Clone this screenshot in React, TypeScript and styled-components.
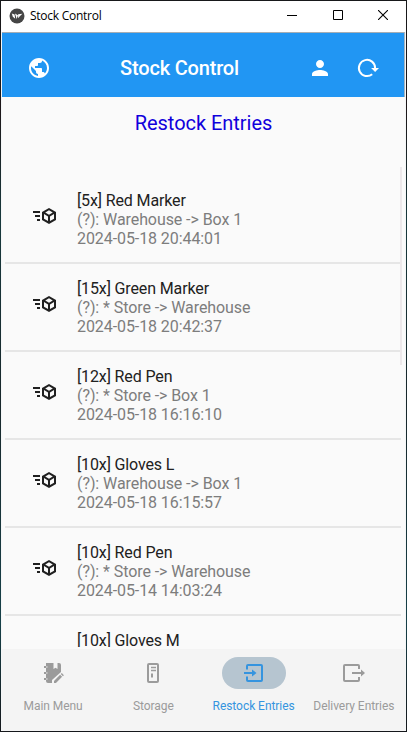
import React from 'react';
import styled, { createGlobalStyle } from 'styled-components';
import { MdPerson, MdPublic } from 'react-icons/md';

const Global = createGlobalStyle`
  * { box-sizing: border-box; }
  html, body { margin: 0; height: 100%; overflow: hidden; }
  body { font-family: Roboto, "Liberation Sans", sans-serif; background: #18181c; }
  svg { display: block; flex: none; }
`;

const Window = styled.div`
  display: flex;
  flex-direction: column;
  width: 407px;
  height: 732px;
  padding: 1px;
  background: linear-gradient(#17181a, #1d1719 15%, #17383c 30%, #18272b 55%, #164048 85%, #15171b);
`;

const TitleBar = styled.div`
  display: flex;
  align-items: center;
  height: 31px;
  flex: none;
  background: #fff;
  color: #000;
`;

const AppIcon = styled.div`
  margin: -2px 0 0 8px;
`;

const WindowTitle = styled.span`
  flex: 1;
  margin-left: 5px;
  margin-top: -2px;
  font: 12px/16px "Open Sans", "Noto Sans", sans-serif;
  letter-spacing: -0.26px;
`;

const WindowButton = styled.div`
  display: flex;
  justify-content: center;
  width: 45.5px;
  margin-top: -3px;
`;

const Client = styled.div`
  display: flex;
  flex-direction: column;
  flex: 1;
  min-height: 0;
  background: #fafafa;
  border: 1px solid #f4f6f7;
  border-width: 0 1px 0 1px;
`;

const AppBar = styled.header`
  display: flex;
  align-items: center;
  height: 65px;
  flex: none;
  padding: 5px 24px 0 25px;
  background: #2196f3;
  border-top: 1px solid #a5aeb5;
  border-right: 1px solid #a5b4c0;
  color: #fff;
`;

const AppTitle = styled.h1`
  flex: 1;
  margin: 0 0 0 69px;
  font-size: 20px;
  font-weight: 500;
  line-height: 24px;
  letter-spacing: -0.17px;
`;

const Action = styled.div`
  margin-left: 24px;
`;

const Heading = styled.h2`
  margin: 0;
  padding-top: 14px;
  height: 70px;
  flex: none;
  text-align: center;
  font-size: 20px;
  font-weight: 400;
  line-height: 24px;
  letter-spacing: -0.03px;
  color: #1000dc;
`;

const Scroller = styled.div`
  display: flex;
  flex: 1;
  min-height: 0;
  overflow: hidden;
  margin-bottom: 2px;
  padding-left: 3px;
`;

const List = styled.div`
  flex: 1;
  padding-top: 9px;
`;

const Track = styled.div`
  width: 2px;
  height: 198px;
  margin: 0 3px 0 -1px;
  background: #ece8ea;
`;

const Row = styled.div`
  display: flex;
  height: 88px;
  padding: 15px 0 0 28px;
  border-bottom: 2px solid #e6e6e6;
`;

const RowIcon = styled.div`
  width: 44px;
  padding-top: 13px;
  color: #202020;
`;

const Line = styled.div<{ $primary?: boolean }>`
  font-size: 16px;
  line-height: 19px;
  white-space: nowrap;
  letter-spacing: ${(p) => (p.$primary ? -0.13 : -0.08)}px;
  color: ${(p) => (p.$primary ? '#212121' : '#7d7d7d')};
`;

const NavBar = styled.nav`
  display: grid;
  grid-template-columns: repeat(4, 100.25px);
  height: 82px;
  flex: none;
  padding: 8px 0 0 1px;
  background: #f4f4f4;
`;

const NavItem = styled.div<{ $active?: boolean }>`
  display: flex;
  flex-direction: column;
  align-items: center;
  color: ${(p) => (p.$active ? '#3594df' : '#9b9b9b')};
`;

const Pill = styled.div<{ $active?: boolean }>`
  display: flex;
  align-items: center;
  justify-content: center;
  width: 64px;
  height: 32px;
  border-radius: 16px;
  background: ${(p) => (p.$active ? '#b6c5d0' : 'transparent')};
`;

const NavLabel = styled.span`
  margin-top: 9px;
  font-size: 12px;
  line-height: 16px;
  letter-spacing: -0.05px;
  white-space: nowrap;
`;

const LogoIcon = () => (
  <svg width="16" height="16" viewBox="0 0 16 16">
    <circle cx="8" cy="8" r="7.5" fill="#454545" />
    <path d="M2.8 5.5 5.6 6.5 6.2 10.8 3.8 8.8zM6 5.4 9 7.2 7.6 11zM9.1 6.2 13.4 5.8 10.8 8.2 9.1 10.2z" fill="#fff" />
  </svg>
);

const ReloadIcon = () => (
  <svg width="24" height="24" viewBox="0 0 24 24" fill="none">
    <path d="M16.2 18.2A8.1 8.1 0 1 1 19.1 12" stroke="#fff" strokeWidth="2" />
    <path d="M15.1 12H23l-3.9 4z" fill="#fff" />
  </svg>
);

const CubeSendIcon = () => (
  <svg width="24" height="24" viewBox="0 0 24 24" fill="currentColor">
    <path d="M16 4 9 8.04v7.92L16 20l7-4.04V8.04M16 6.31l3.8 2.19-3.8 2.19-3.79-2.19M0 7v2h7V7m4 3.11 4 2.31v4.69l-4-2.3m10-4.7v4.7l-4 2.3v-4.69M2 11v2h5v-2m-3 4v2h3v-2" />
  </svg>
);

const NotebookIcon = () => (
  <svg width="24" height="24" viewBox="0 0 24 24" fill="currentColor">
    <path d="M5 2h7.5v6l2-1.3 2 1.3V2H18a2 2 0 0 1 2 2v7l-9 8v3H7a2 2 0 0 1-2-2v-1H3v-2h2v-4H3v-2h2V7H3V5h2z" />
    <path d="m13 19.9 6.1-6.1 2 2L15 22h-2zM19.8 13.1l1-1 2.1 2.1-1 1z" />
    <path d="M5 6h1.6M5 12h1.6M5 18h1.6" stroke="#f4f4f4" strokeWidth=".9" />
  </svg>
);

const StorageIcon = () => (
  <svg width="24" height="24" viewBox="0 0 24 24" fill="none" stroke="currentColor">
    <rect x="7" y="3" width="10" height="18" rx="1" strokeWidth="2" />
    <path d="M10 6.5h5M10 9.5h5" strokeWidth="1.4" />
    <path d="M11 12.5v4" strokeWidth="2" />
  </svg>
);

const EnterIcon = () => (
  <svg width="24" height="24" viewBox="0 0 24 24" fill="none" stroke="currentColor" strokeWidth="2">
    <path d="M5 8.5V5a1 1 0 0 1 1-1h13a1 1 0 0 1 1 1v14a1 1 0 0 1-1 1H6a1 1 0 0 1-1-1v-3.5M2 12h11" />
    <path d="m10 8.5 4.5 3.5-4.5 3.5z" fill="currentColor" stroke="none" />
  </svg>
);

const ExitIcon = () => (
  <svg width="24" height="24" viewBox="0 0 24 24" fill="none" stroke="currentColor" strokeWidth="2">
    <path d="M17 8V5a1 1 0 0 0-1-1H3a1 1 0 0 0-1 1v14a1 1 0 0 0 1 1h13a1 1 0 0 0 1-1v-3M10 12h11" />
    <path d="m19 8.5 4 3.5-4 3.5z" fill="currentColor" stroke="none" />
  </svg>
);

const entries = [
  { title: '[5x] Red Marker', route: '(?): Warehouse -> Box 1', time: '2024-05-18 20:44:01' },
  { title: '[15x] Green Marker', route: '(?): * Store -> Warehouse', time: '2024-05-18 20:42:37' },
  { title: '[12x] Red Pen', route: '(?): * Store -> Box 1', time: '2024-05-18 16:16:10' },
  { title: '[10x] Gloves L', route: '(?): Warehouse -> Box 1', time: '2024-05-18 16:15:57' },
  { title: '[10x] Red Pen', route: '(?): * Store -> Warehouse', time: '2024-05-14 14:03:24' },
  { title: '[10x] Gloves M', route: '', time: '' },
];

const tabs = [
  { label: 'Main Menu', Icon: NotebookIcon },
  { label: 'Storage', Icon: StorageIcon },
  { label: 'Restock Entries', Icon: EnterIcon, active: true },
  { label: 'Delivery Entries', Icon: ExitIcon },
];

export default function App() {
  return (
    <Window>
      <Global />
      <TitleBar>
        <AppIcon><LogoIcon /></AppIcon>
        <WindowTitle>Stock Control</WindowTitle>
        <WindowButton>
          <svg width="10" height="10"><path d="M0 5.5h10" stroke="#000" /></svg>
        </WindowButton>
        <WindowButton>
          <svg width="10" height="10"><path d="M.5.5h9v9h-9z" fill="none" stroke="#000" /></svg>
        </WindowButton>
        <WindowButton>
          <svg width="10" height="10"><path d="m0 0 10 10M10 0 0 10" stroke="#000" strokeWidth="1.1" /></svg>
        </WindowButton>
      </TitleBar>
      <Client>
        <AppBar>
          <MdPublic size={24} />
          <AppTitle>Stock Control</AppTitle>
          <Action><MdPerson size={24} /></Action>
          <Action><ReloadIcon /></Action>
        </AppBar>
        <Heading>Restock Entries</Heading>
        <Scroller>
          <List>
            {entries.map((entry, i) => (
              <Row key={i}>
                <RowIcon>{entry.route && <CubeSendIcon />}</RowIcon>
                <div>
                  <Line $primary>{entry.title}</Line>
                  <Line>{entry.route}</Line>
                  <Line>{entry.time}</Line>
                </div>
              </Row>
            ))}
          </List>
          <Track />
        </Scroller>
        <NavBar>
          {tabs.map(({ label, Icon, active }) => (
            <NavItem key={label} $active={active}>
              <Pill $active={active}><Icon /></Pill>
              <NavLabel>{label}</NavLabel>
            </NavItem>
          ))}
        </NavBar>
      </Client>
    </Window>
  );
}
